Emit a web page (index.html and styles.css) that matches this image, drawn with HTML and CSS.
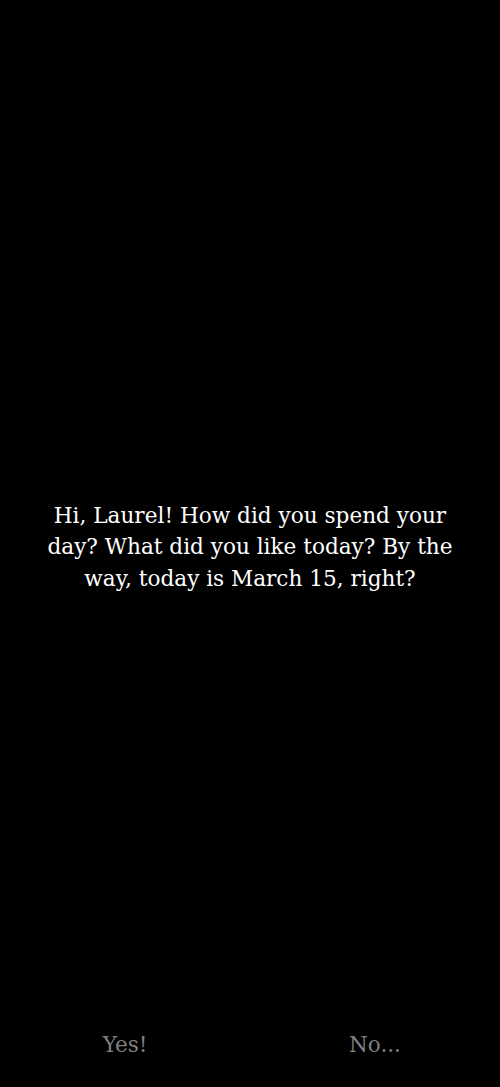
FILE: index.html
```html
<!DOCTYPE html>
<html lang="en">
<head>
<meta charset="utf-8">
<title>Greeting</title>
<link rel="stylesheet" href="styles.css">
</head>
<body>
<div class="screen">
  <main class="message">
    <p class="message-text">Hi, Laurel! How did you spend your day? What did you like today? By the way, today is March 15, right?</p>
  </main>
  <footer class="answers">
    <button class="answer">Yes!</button>
    <button class="answer">No...</button>
  </footer>
</div>
</body>
</html>
```
FILE: styles.css
```css
html, body {
  margin: 0;
  padding: 0;
  background: #000;
}
.screen {
  height: 100vh;
  display: flex;
  flex-direction: column;
  font-family: "DejaVu Serif", "Liberation Serif", serif;
  color: #fff;
}
.message {
  flex: 1;
  display: flex;
  align-items: center;
  justify-content: center;
  padding: 93px 37px 0;
}
.message-text {
  margin: 0;
  font-size: 21.6px;
  line-height: 31.5px;
  text-align: center;
}
.answers {
  height: 86px;
  display: flex;
}
.answer {
  flex: 1;
  background: none;
  border: none;
  color: #808080;
  font-family: inherit;
  font-size: 21.5px;
  padding: 0;
  height: 86px;
  cursor: pointer;
}
```
